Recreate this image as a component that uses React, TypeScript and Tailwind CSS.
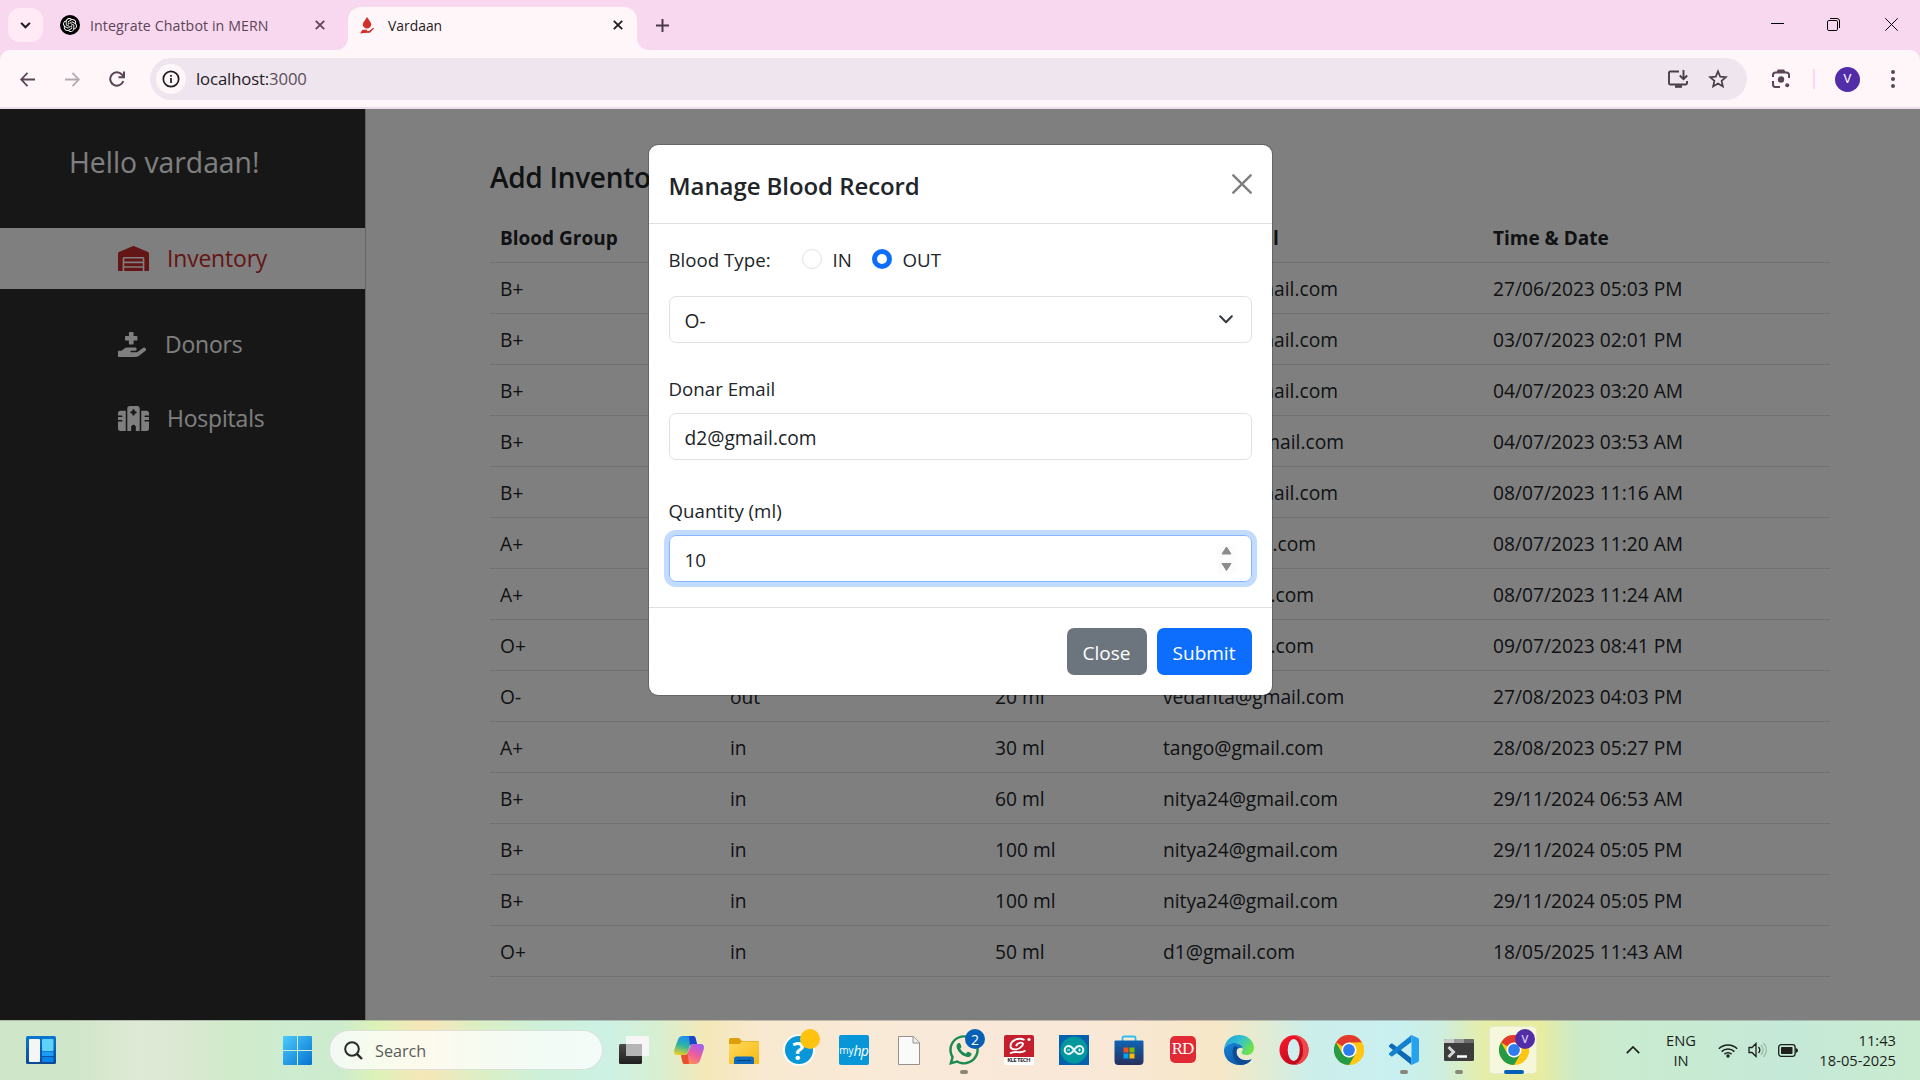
import React from "react";
import { FaWarehouse, FaHandHoldingMedical, FaWhatsapp } from "react-icons/fa";
import { FaHospital } from "react-icons/fa6";
import { SiOpenai } from "react-icons/si";

type Row = [string, string, string, string, string, string?];

const rows: Row[] = [
  ["B+", "", "", "nitya24@gmail.com", "27/06/2023 05:03 PM", "w-[175px]"],
  ["B+", "", "", "nitya24@gmail.com", "03/07/2023 02:01 PM", "w-[175px]"],
  ["B+", "", "", "nitya24@gmail.com", "04/07/2023 03:20 AM", "w-[175px]"],
  ["B+", "", "", "vardaan@gmail.com", "04/07/2023 03:53 AM", "w-[181px]"],
  ["B+", "", "", "nitya24@gmail.com", "08/07/2023 11:16 AM", "w-[175px]"],
  ["A+", "", "", "nitya@gmail.com", "08/07/2023 11:20 AM", "w-[153px]"],
  ["A+", "", "", "donor@gmail.com", "08/07/2023 11:24 AM", "w-[151px]"],
  ["O+", "", "", "donor@gmail.com", "09/07/2023 08:41 PM", "w-[151px]"],
  ["O-", "out", "20 ml", "vedanta@gmail.com", "27/08/2023 04:03 PM"],
  ["A+", "in", "30 ml", "tango@gmail.com", "28/08/2023 05:27 PM"],
  ["B+", "in", "60 ml", "nitya24@gmail.com", "29/11/2024 06:53 AM"],
  ["B+", "in", "100 ml", "nitya24@gmail.com", "29/11/2024 05:05 PM"],
  ["B+", "in", "100 ml", "nitya24@gmail.com", "29/11/2024 05:05 PM"],
  ["O+", "in", "50 ml", "d1@gmail.com", "18/05/2025 11:43 AM"],
];

const CloseX = ({ className }: { className: string }) => (
  <svg viewBox="0 0 10 10" className={className} stroke="currentColor" strokeWidth="1.8" fill="none">
    <path d="M0.8 0.8 9.2 9.2M9.2 0.8 0.8 9.2" />
  </svg>
);

function TabStrip() {
  return (
    <div className="flex h-[50px] bg-[#f8d8ef] text-[14.2px]">
      <div className="ml-2 mt-2 flex h-[34px] w-[35px] items-center justify-center rounded-xl bg-[#ffeaf6]">
        <svg viewBox="0 0 12 8" className="h-[7px] w-[11px]" fill="none" stroke="#1f1a1e" strokeWidth="2.4">
          <path d="M1 1l5 5 5-5" />
        </svg>
      </div>
      <div className="ml-[17px] flex h-[50px] w-[288px] items-center">
        <span className="flex size-5 items-center justify-center rounded-full bg-black text-white">
          <SiOpenai className="size-[14px]" />
        </span>
        <span className="ml-[10px] w-[214px] whitespace-nowrap pt-[2px] tracking-[0.09px] text-[#5c4458]">Integrate Chatbot in MERN</span>
        <CloseX className="ml-[11px] size-[10px] text-[#5c4458]" />
      </div>
      <div className="relative mt-[7px] flex h-[43px] w-[289px] items-center rounded-t-[13px] bg-[#fff6fa] pb-[7px]">
        <svg viewBox="0 0 12 12" className="absolute -left-3 bottom-0 size-3" fill="#fff6fa">
          <path d="M12 0v12H0A12 12 0 0 0 12 0z" />
        </svg>
        <svg viewBox="0 0 12 12" className="absolute -right-3 bottom-0 size-3" fill="#fff6fa">
          <path d="M0 0v12h12A12 12 0 0 1 0 0z" />
        </svg>
        <svg viewBox="0 0 14 17" className="ml-[12px] h-[17px] w-[14px]" fill="#d32f2b">
          <path d="M7 0c1.800 3 4.200 5 4.200 7.400a4.200 4.200 0 0 1-8.400 0C2.800 5 5.600 3 7 0z" />
          <path d="M0 16.500 2.500 12.800h4.800l-.4 1.200h2.300l4-3.200.8.700L10 15.800 4 16z" />
        </svg>
        <span className="ml-[14px] w-[219px] pt-[2px] text-[13.9px] text-[#1f1a1e]">Vardaan</span>
        <CloseX className="ml-[6px] size-[10px] text-[#1f1a1e]" />
      </div>
      <svg viewBox="0 0 12 12" className="ml-[19px] mt-[19px] size-[13px]" stroke="#4a3847" strokeWidth="1.800">
        <path d="M6 0v12M0 6h12" />
      </svg>
      <div className="ml-auto flex text-black">
        <svg viewBox="0 0 13 13" className="mr-[43px] mt-[17px] size-[13px]" stroke="currentColor" strokeWidth="1">
          <path d="M0 6.500h13" />
        </svg>
        <svg viewBox="0 0 13 13" className="mr-[45px] mt-[18px] size-[13px]" stroke="currentColor" fill="none" strokeWidth="1">
          <rect x=".5" y="2.500" width="10" height="10" rx="1.300" />
          <path d="M3 .5h7a2.500 2.500 0 0 1 2.500 2.500v7" />
        </svg>
        <svg viewBox="0 0 13 13" className="mr-[22px] mt-[18px] size-[13px]" stroke="currentColor" strokeWidth="1">
          <path d="M.3.3l12.400 12.400M12.700.3.3 12.700" />
        </svg>
      </div>
    </div>
  );
}

function Toolbar() {
  return (
    <div className="bg-[#f8d8ef]">
      <div className="flex h-[59px] items-start rounded-t-[10px] border-b-2 border-[#ecdde8] bg-[#fff6fa] pt-2 text-[#5a4456]">
        <div className="flex h-[42px] w-[150px] items-center">
          <svg viewBox="0 0 16 16" className="ml-5 size-[15px]" fill="none" stroke="currentColor" strokeWidth="1.900">
            <path d="M16 8H1.500M8 1 1.300 8 8 15" />
          </svg>
          <svg viewBox="0 0 16 16" className="ml-[30px] size-[15px] text-[#b3a9b1]" fill="none" stroke="currentColor" strokeWidth="1.900">
            <path d="M0 8h14.500M8 1l6.700 7L8 15" />
          </svg>
          <svg viewBox="0 0 16 16" className="ml-[29px] size-4" fill="none" stroke="currentColor" strokeWidth="2">
            <path d="M14.300 10A6.700 6.700 0 1 1 13 3.600L14.500 5.500M15 .5v5.700H9.500" />
          </svg>
        </div>
        <div className="flex h-[42px] w-[1597px] items-center rounded-full bg-[#efe5ee] pl-[6px]">
          <span className="flex size-[30px] items-center justify-center rounded-full bg-[#fff6fa]">
            <svg viewBox="0 0 18 18" className="size-[18px] text-[#1f1a1e]" fill="none" stroke="currentColor" strokeWidth="1.700">
              <circle cx="9" cy="9" r="7.700" />
              <path d="M9 8v5M9 5v1.700" />
            </svg>
          </span>
          <span className="ml-[10px] text-[16.700px] tracking-[-0.12px] text-[#1f1a1e]">
            localhost:<span className="text-[#5a4f59]">3000</span>
          </span>
          <svg viewBox="0 0 20 18" className="ml-auto h-[18px] w-5 text-[#474047]" fill="none" stroke="currentColor" strokeWidth="1.900">
            <path d="M11 1.500H2.500A1.300 1.300 0 0 0 1 2.800v10.400a1.300 1.300 0 0 0 1.300 1.300h15.400A1.300 1.300 0 0 0 19 13.200V11M15.500 0v9M11.800 5.500l3.700 3.700L19.200 5.500" />
            <path d="M7 16.500h7" strokeWidth="2.600" />
          </svg>
          <svg viewBox="0 0 20 20" className="ml-5 mr-[19px] size-5 text-[#474047]" fill="none" stroke="currentColor" strokeWidth="1.700">
            <path d="M10 2.300l2.200 5.300 5.700.5-4.300 3.800 1.300 5.600-4.900-3-4.900 3 1.300-5.600L2.100 8.100l5.700-.5z" />
          </svg>
        </div>
        <div className="flex h-[42px] flex-1 items-center">
          <svg viewBox="0 0 20 20" className="ml-[24px] size-5" fill="none" stroke="currentColor" strokeWidth="2">
            <path d="M2 8V6a2.500 2.500 0 0 1 2.500-2.500h11A2.500 2.500 0 0 1 18 6v3M2 12v3.500A2.500 2.500 0 0 0 4.500 18H9M6.500 3 7.500 1.500h5l1 1.500" />
            <circle cx="10" cy="10.500" r="3.200" fill="currentColor" stroke="none" />
            <circle cx="16.200" cy="16.200" r="2" fill="currentColor" stroke="none" />
          </svg>
          <span className="ml-[22px] h-5 w-[2px] bg-[#ffd6f2]" />
          <span className="ml-5 flex size-[25px] items-center justify-center rounded-full bg-[#512da8] font-['Roboto',sans-serif] text-[13px] text-white">V</span>
          <svg viewBox="0 0 4 18" className="ml-[31px] h-[18px] w-1" fill="currentColor">
            <circle cx="2" cy="2" r="2" />
            <circle cx="2" cy="9" r="2" />
            <circle cx="2" cy="16" r="2" />
          </svg>
        </div>
      </div>
    </div>
  );
}

function Sidebar() {
  return (
    <aside className="w-[366px] shrink-0 border-r border-[#c8c8c8] bg-[#2e2e2e] text-white">
      <h4 className="pl-[69px] pt-[33px] text-[28.300px] leading-[40px]">Hello vardaan!</h4>
      <nav className="mt-[46px] text-[22.900px] leading-[30px] tracking-[-0.15px]">
        <div className="flex h-[61px] items-center bg-white pl-[118px] text-[#c92a2a]">
          <FaWarehouse className="h-[25px] w-[31px]" />
          <span className="ml-[18px] pt-px">Inventory</span>
        </div>
        <div className="mt-[25px] flex h-[61px] items-center pl-[118px]">
          <FaHandHoldingMedical className="h-[25px] w-[28px]" />
          <span className="ml-[19px] pt-px">Donors</span>
        </div>
        <div className="mt-[13px] flex h-[61px] items-center pl-[118px]">
          <FaHospital className="h-[25px] w-[31px]" />
          <span className="ml-[18px] pt-px">Hospitals</span>
        </div>
      </nav>
    </aside>
  );
}

function Inventory() {
  const cols = "grid grid-cols-[230px_265px_168px_330px_1fr] pl-[10px] pt-[11px] h-[51px] leading-[30px] border-b border-[#dee2e6] whitespace-nowrap";
  return (
    <main className="w-[1464px] pl-[124px] pt-[47px] text-[19.200px] text-[#212529]">
      <h4 className="h-[56px] text-[28px] font-semibold leading-[42px] tracking-[-0.3px]">Add Inventory</h4>
      <div className={cols + " text-[19px] font-bold"}>
        <span>Blood Group</span>
        <span />
        <span />
        <span>Donar Email</span>
        <span>Time &amp; Date</span>
      </div>
      {rows.map((r, i) => (
        <div key={i} className={cols}>
          <span>{r[0]}</span>
          <span>{r[1]}</span>
          <span>{r[2]}</span>
          <span className={r[5] ? r[5] + " flex justify-end" : ""}>{r[3]}</span>
          <span>{r[4]}</span>
        </div>
      ))}
    </main>
  );
}

function Modal() {
  return (
    <div className="h-[552px] w-[625px] rounded-[10px] border border-black/20 bg-white bg-clip-padding text-[#212529]">
      <div className="flex h-[79px] items-center justify-between border-b border-[#dee2e6] px-5">
        <h5 className="pt-[3px] text-[24px] font-semibold tracking-[-0.07px]">Manage Blood Record</h5>
        <svg viewBox="0 0 20 20" className="size-5" stroke="#7f7f7f" strokeWidth="2.400" strokeLinecap="round">
          <path d="M1.300 1.300l17.400 17.400M18.700 1.300 1.300 18.700" />
        </svg>
      </div>
      <div className="flex h-[384px] flex-col border-b border-[#dee2e6] px-5 pt-5">
        <div className="flex h-[30px] items-center">
          <span className="w-[133px] pt-[3px]">Blood Type:</span>
          <span className="size-5 rounded-full border border-[#dee2e6]" />
          <span className="ml-[11px] w-[39px] pt-[3px]">IN</span>
          <span className="flex size-5 items-center justify-center rounded-full bg-[#0d6efd]">
            <span className="size-[10px] rounded-full bg-white" />
          </span>
          <span className="ml-[11px] pt-[3px]">OUT</span>
        </div>
        <div className="mt-[22px] flex h-[47px] items-center justify-between rounded-[7px] border border-[#dee2e6] pl-[15px] pr-[18px]">
          <span className="pt-[3px] text-[19.200px]">O-</span>
          <svg viewBox="0 0 14 9" className="h-[9px] w-[14px]" fill="none" stroke="#343a40" strokeWidth="2" strokeLinecap="round" strokeLinejoin="round">
            <path d="M1.200 1.200 7 7.200l5.800-6" />
          </svg>
        </div>
        <label className="mt-[30px] h-[40px] leading-[32px]">Donar Email</label>
        <div className="flex h-[47px] items-center rounded-[7px] border border-[#dee2e6] pl-[15px]">
          <span className="pt-[3px] text-[19.200px]">d2@gmail.com</span>
        </div>
        <label className="mt-[34px] h-[41px] leading-[33px]">Quantity (ml)</label>
        <div className="flex h-[47px] items-center justify-between rounded-[7px] border border-[#86b7fe] pl-[15px] pr-[15px] ring-[5px] ring-[#c2dbfe]">
          <span className="pt-[3px]">10</span>
          <span className="flex h-[30px] w-[19px] items-center justify-center bg-[#fcfcfc]">
            <svg viewBox="0 0 11 25" className="h-[25px] w-[11px]" fill="#8b8b8b" stroke="#8b8b8b" strokeLinejoin="round">
              <path d="M5.500 1 10 8H1zM5.500 24.500 10 17.500H1z" />
            </svg>
          </span>
        </div>
      </div>
      <div className="flex justify-end gap-[10px] px-5 pt-5 text-white">
        <span className="flex h-[47px] w-20 items-center justify-center rounded-[7px] bg-[#6c757d] pt-[3px] text-[19px]">Close</span>
        <span className="flex h-[47px] w-[95px] items-center justify-center rounded-[7px] bg-[#0d6efd] pt-[3px] text-[19px]">Submit</span>
      </div>
    </div>
  );
}

const Chrome = () => (
  <svg viewBox="0 0 30 30" className="size-[30px]">
    <circle cx="15" cy="15" r="15" fill="#ffc614" />
    <path d="M15 15 2 7.500A15 15 0 0 1 28 7.500L15 8z" fill="#e23b2e" />
    <path d="M28 7.500H15l6.500 11.300L15 30A15 15 0 0 0 28 7.500z" fill="#ffc614" />
    <path d="M2 7.500A15 15 0 0 0 15 30l6.500-11.300-6.500 3.800-6.500-3.800z" fill="#259b45" />
    <circle cx="15" cy="15" r="7.500" fill="#fff" />
    <circle cx="15" cy="15" r="5.900" fill="#2f7cee" />
  </svg>
);

const Slot = ({ children, dot }: { children: React.ReactNode; dot?: boolean }) => (
  <div className="relative flex h-[60px] w-[55px] items-center justify-center">
    {children}
    {dot && <span className="absolute bottom-[6px] h-1 w-2 rounded-full bg-[#8b8578]" />}
  </div>
);

function TaskbarIcons() {
  return (
    <div className="ml-[3px] flex">
      <Slot>
        <svg viewBox="0 0 30 28" className="h-7 w-[30px]">
          <defs>
            <linearGradient id="tv" x1="0" y1="0" x2="0" y2="1"><stop stopColor="#4a4a4a" /><stop offset="1" stopColor="#1f1f1f" /></linearGradient>
          </defs>
          <rect y="8" width="23" height="20" rx="1.500" fill="url(#tv)" />
          <rect x="7" width="23" height="20" rx="1.500" fill="#f6f6f6" />
          <path d="M7 8h16v12H8.500A1.500 1.500 0 0 1 7 18.500z" fill="#b5b5b5" />
        </svg>
      </Slot>
      <Slot>
        <svg viewBox="0 0 30 28" className="h-7 w-[30px]">
          <defs>
            <linearGradient id="c1" x1=".5" y1="0" x2=".2" y2="1"><stop stopColor="#1b8df0" /><stop offset=".5" stopColor="#2fb5a0" /><stop offset="1" stopColor="#f0d020" /></linearGradient>
            <linearGradient id="c2" x1=".8" y1="0" x2=".2" y2="1"><stop stopColor="#a35cf5" /><stop offset=".5" stopColor="#ee5f9a" /><stop offset="1" stopColor="#fb9a4a" /></linearGradient>
          </defs>
          <path d="M9 0h10c2 0 2.500 1.500 3 4l1 4h-4c-2 0-3 1-3.500 3l-2 6c-.5 1.500-1.500 2-3 2H3c-3 0-3.500-3-2.500-6L4 3.500C5 1 6.500 0 9 0z" fill="url(#c1)" />
          <path d="M15 0h4c2 0 2.500 1.500 3 4l1 4h-4c-1.500 0-2.500.5-3 2z" fill="#1b45c4" />
          <path d="M21 28H11c-2 0-2.500-1.500-3-4l-1-5h3.500c2 0 3-1 3.500-3l2.500-6c.5-1.500 1.500-2 3-2H27c3 0 3.500 3 2.500 6L26 24.500c-1 2.500-2.500 3.500-5 3.500z" fill="url(#c2)" />
          <path d="M15 28h-4c-2 0-2.500-1.500-3-4l-1-5h3.500c1.500 0 2.500-.5 3-1.500z" fill="#e9502f" />
        </svg>
      </Slot>
      <Slot>
        <svg viewBox="0 0 30 26" className="mb-[-1px] h-[26px] w-[30px]">
          <defs>
            <linearGradient id="fo" x1="0" y1="0" x2="1" y2="1"><stop stopColor="#ffd95c" /><stop offset="1" stopColor="#f7b913" /></linearGradient>
          </defs>
          <path d="M0 1.500A1.500 1.500 0 0 1 1.500 0H10l3 3h15.500A1.500 1.500 0 0 1 30 4.500V10H0z" fill="#dd9f0a" />
          <path d="M0 6h10.500L13 3.500h15.500A1.500 1.500 0 0 1 30 5v21H0z" fill="url(#fo)" />
          <path d="M5 26v-5a2.500 2.500 0 0 1 2.500-2.500h15A2.500 2.500 0 0 1 25 21v5z" fill="#0f6cbd" />
          <path d="M8 22.500h14" stroke="#0a3f85" />
        </svg>
      </Slot>
      <Slot>
        <span className="flex size-7 items-center justify-center rounded-full bg-[#0797d8] text-[25px] font-bold leading-none text-white ring-2 ring-white/80">?</span>
        <span className="absolute left-[29px] top-[9px] size-5 rounded-full bg-[#ffc20e]" />
      </Slot>
      <Slot>
        <span className="flex size-[30px] items-center justify-center rounded-[2px] bg-[#0797d8] text-white">
          <span className="text-[10px]">my</span>
          <span className="text-[14px] italic tracking-[-1px]">hp</span>
        </span>
      </Slot>
      <Slot>
        <svg viewBox="0 0 22 29" className="h-[29px] w-[22px]" fill="#fafafa" stroke="#97918b">
          <path d="M.5.5h15l6 6v22H.5z" />
          <path d="M15 .5V7h6.500" fill="#eee" />
        </svg>
      </Slot>
      <Slot dot>
        <FaWhatsapp className="size-[34px] text-[#1c8a55]" />
        <span className="absolute left-[29px] top-[9px] flex size-5 items-center justify-center rounded-full bg-[#0560b6] text-[14px] text-white">2</span>
      </Slot>
      <Slot>
        <span className="flex size-[30px] flex-col items-center rounded-[2px] bg-white">
          <svg viewBox="0 0 30 22" className="h-[22px] w-[30px]">
            <path d="M0 2a2 2 0 0 1 2-2h26a2 2 0 0 1 2 2v20H0z" fill="#c51f2d" />
            <path d="M20.500 5C14 1.500 6.500 6 6.500 11c0 4.500 8 4.500 11.500 0 3.500-4-3.500-5-6 0M6 18.500c6-4 9 1.500 15.500-3" stroke="#fff" strokeWidth="1.900" fill="none" />
            <circle cx="25" cy="4.500" r="1.600" fill="#fff" />
          </svg>
          <span className="whitespace-nowrap text-[6px] font-bold leading-[7px] tracking-[-0.6px] text-[#333]">KLE TECH</span>
        </span>
      </Slot>
      <Slot>
        <span className="flex size-[30px] items-center justify-center bg-[#0560b0]">
          <svg viewBox="0 0 28 28" className="size-7">
            <circle cx="14" cy="14" r="13.500" fill="#00979d" />
            <path d="M14 14c-2-3-3.500-4-5.300-4a4 4 0 0 0 0 8c1.800 0 3.300-1 5.300-4s3.500-4 5.300-4a4 4 0 0 1 0 8c-1.800 0-3.300-1-5.300-4z" stroke="#e8f4f4" strokeWidth="2" fill="none" />
            <path d="M7 14h3M18 14h3M19.500 12.500v3" stroke="#e8f4f4" strokeWidth="1" />
          </svg>
        </span>
      </Slot>
      <Slot>
        <svg viewBox="0 0 30 30" className="size-[30px]">
          <defs><linearGradient id="st" x1="0" y1="0" x2="0" y2="1"><stop stopColor="#0f64b4" /><stop offset="1" stopColor="#27305e" /></linearGradient></defs>
          <path d="M8.500 7V3a1.500 1.500 0 0 1 1.500-1.500h10A1.500 1.500 0 0 1 21.500 3v4" fill="none" stroke="#2bbdf3" strokeWidth="1.800" />
          <path d="M.5 6.500A1 1 0 0 1 1.500 5.500h27a1 1 0 0 1 1 1V26a4 4 0 0 1-4 4h-21a4 4 0 0 1-4-4z" fill="url(#st)" />
          <path d="M9.500 12.500h5v5h-5z" fill="#f25022" />
          <path d="M15.500 12.500h5v5h-5z" fill="#7fba00" />
          <path d="M9.500 18.500h5v5h-5z" fill="#00a4ef" />
          <path d="M15.500 18.500h5v5h-5z" fill="#ffb900" />
        </svg>
      </Slot>
      <Slot>
        <span className="mb-px mr-[2px] flex h-[27px] w-[26px] items-center justify-center rounded-[5px] bg-[#e22a35] pb-[2px] font-['Liberation_Serif',serif] text-[17px] tracking-[-1px] text-white">RD</span>
      </Slot>
      <Slot>
        <svg viewBox="0 0 30 30" className="size-[30px]">
          <defs>
            <linearGradient id="e1" x1="0" y1="0" x2="1" y2=".5"><stop stopColor="#1b9de0" /><stop offset=".55" stopColor="#33c1cf" /><stop offset="1" stopColor="#6be34c" /></linearGradient>
            <linearGradient id="e2" x1="0" y1="0" x2=".6" y2="1"><stop stopColor="#1686d9" /><stop offset="1" stopColor="#0f55a8" /></linearGradient>
          </defs>
          <path d="M0 14C1 6 7 0 15 0c9 0 15 6.500 15 12.500 0 5-3.500 7.500-7.500 7.500-3 0-5-1.200-5-2.200 0-.8 1.300-1.300 1.300-3.800 0-3-3.500-6-9-6C5 8 1.500 10.500 0 14z" fill="url(#e1)" />
          <path d="M0 14.500C1.500 10.500 5 8 10 8c5 0 8.500 2.500 8.800 5.500-1.500-1.500-6-1-6.300 3C12 22 17 25.500 22 25.500c2 0 4-.7 5.500-1.300C25 28 20.500 30 15.500 30 6 30-.5 23 0 14.500z" fill="url(#e2)" />
          <path d="M10.500 11C7 15 8 26 16.500 29.800c5 0 9-2 11-5.600-6 2.500-14 .3-15-6.200-.3-3 .5-4.500 2-5.500z" fill="#0c4a94" />
        </svg>
      </Slot>
      <Slot>
        <svg viewBox="0 0 30 30" className="size-[30px]">
          <defs><linearGradient id="op" x1="0" y1="0" x2="1" y2="1"><stop stopColor="#ff1b2d" /><stop offset="1" stopColor="#a70014" /></linearGradient></defs>
          <ellipse cx="15" cy="15" rx="14.500" ry="14.700" fill="url(#op)" />
          <path d="M15 .3A14.500 14.700 0 0 1 15 29.700 14 14 0 0 0 24 15 14 14 0 0 0 15 .3z" fill="#f0474c" />
          <ellipse cx="14.700" cy="15" rx="6" ry="11" fill="#cfeeee" />
        </svg>
      </Slot>
      <Slot><Chrome /></Slot>
      <Slot dot>
        <svg viewBox="0 0 30 30" className="size-[30px]">
          <path d="M0 10.500 2 8.700c.5-.4 1-.4 1.500 0L22.500 23v7L.3 12c-.5-.5-.6-1-.3-1.500z" fill="#0a6ab5" />
          <path d="M0 19.500l2 1.800c.5.4 1 .4 1.500 0L22.500 7V0L.3 18c-.5.500-.6 1-.3 1.500z" fill="#1482cc" />
          <path d="M22.500 0 29 3c.6.300 1 .8 1 1.500v21c0 .7-.4 1.200-1 1.500l-6.500 3c-.8.200-1.300 0-1.700-.5 1 .8 1.700.2 1.700-.7V1.200c0-.9-.7-1.500-1.700-.7.500-.5 1-.7 1.700-.5z" fill="#25a3f0" />
        </svg>
      </Slot>
      <Slot dot>
        <svg viewBox="0 0 30 22" className="h-[22px] w-[30px]">
          <rect width="30" height="22" rx="1.500" fill="#3c3c3c" />
          <path d="M0 4V1.500A1.500 1.500 0 0 1 1.500 0H10v4z" fill="#c9c9c9" />
          <path d="M10 0h10v4H10z" fill="#999" />
          <path d="M20 0h8.500A1.500 1.500 0 0 1 30 1.500V4H20z" fill="#6b6b6b" />
          <path d="M4.500 8l5 5-5 5" stroke="#d4d4d4" strokeWidth="3" fill="none" />
          <path d="M13 17.500h10" stroke="#fff" strokeWidth="2.500" />
        </svg>
      </Slot>
      <Slot>
        <span className="absolute left-[3px] top-[6px] h-12 w-12 rounded-[5px] border border-black/5 bg-white/60" />
        <span className="relative"><Chrome /></span>
        <span className="absolute left-[29px] top-[9px] flex size-5 items-center justify-center rounded-full bg-[#512da8] text-[11px] font-semibold text-[#d5c8f0]">V</span>
        <span className="absolute bottom-[6px] h-1 w-5 rounded-full bg-[#0560b6]" />
      </Slot>
    </div>
  );
}

function Taskbar() {
  return (
    <div className="flex h-[60px] items-center bg-[linear-gradient(90deg,#cfe6c8_0px,#cfe6c8_70px,#dfe9d6_140px,#dae8d2_190px,#d0ebc9_230px,#cdecd0_290px,#cdecce_340px,#dcf2b8_375px,#f6e6b8_425px,#dcefc4_480px,#cdf0d9_540px,#cdf1e4_610px,#d8efd0_660px,#f4e8b8_705px,#f8e9d0_760px,#f9e9d8_900px,#f9e8d8_1080px,#f6e7c8_1220px,#e6ebd0_1255px,#cceeea_1310px,#c9f0f0_1400px,#cdeee0_1440px,#e4edac_1480px,#e8eca0_1540px,#cdeac8_1575px,#c9ebcf_1620px,#c5e9d8_1790px,#c9ebcf_1920px)] shadow-[inset_0_1px_0_rgba(120,120,120,0.4)]">
      <svg viewBox="0 0 30 28" className="ml-[26px] h-7 w-[30px]">
        <defs><linearGradient id="wi" x1="0" y1="0" x2="0" y2="1"><stop stopColor="#0a78d0" /><stop offset="1" stopColor="#0c4a92" /></linearGradient></defs>
        <rect width="30" height="28" rx="1.500" fill="url(#wi)" />
        <rect x="3" y="3" width="11" height="23" rx="1" fill="#f5f5f5" />
        <rect x="16" y="3" width="11.500" height="12" rx="1" fill="#5fd2fc" />
        <rect x="16" y="15.500" width="11.500" height="4.500" fill="#1b9df5" />
        <rect x="16" y="21" width="11.500" height="5" rx="1" fill="#0a84ea" />
      </svg>
      <svg viewBox="0 0 29 29" className="ml-[227px] size-[29px]">
        <defs><linearGradient id="wn" x1="0" y1="0" x2="1" y2="1"><stop stopColor="#4ccbfb" /><stop offset="1" stopColor="#0573d2" /></linearGradient></defs>
        <path d="M1 0h13v14H0V1a1 1 0 0 1 1-1zM15 0h13a1 1 0 0 1 1 1v13H15zM0 15h14v14H1a1 1 0 0 1-1-1zM15 15h14v13a1 1 0 0 1-1 1H15z" fill="url(#wn)" />
      </svg>
      <div className="ml-[17px] flex h-10 w-[274px] items-center rounded-full border border-black/10 bg-white/75 pl-[14px]">
        <svg viewBox="0 0 19 19" className="size-[19px]" fill="none" stroke="#2a2a2a" strokeWidth="2">
          <circle cx="8" cy="8" r="6.800" />
          <path d="M12.800 12.800 18 18" strokeWidth="2.400" />
        </svg>
        <span className="ml-[12px] pt-[2px] text-[16.200px] text-[#5b5b5b]">Search</span>
      </div>
      <TaskbarIcons />
      <div className="flex flex-1 items-center text-[14.700px] leading-5 text-[#1c1f1c]">
        <svg viewBox="0 0 14 8" className="ml-[85px] h-2 w-[14px]" fill="none" stroke="currentColor" strokeWidth="1.700">
          <path d="M.8 7.200 7 1l6.200 6.200" />
        </svg>
        <div className="ml-[14px] w-[54px] text-center">ENG<br />IN</div>
        <svg viewBox="0 0 20 15" className="ml-[10px] h-[15px] w-5" fill="none" stroke="currentColor" strokeWidth="1.500">
          <path d="M.8 5.800a13 13 0 0 1 18.400 0M3.600 8.600a9 9 0 0 1 12.800 0M6.400 11.300a5 5 0 0 1 7.200 0" />
          <circle cx="10" cy="13" r="1.700" fill="currentColor" stroke="none" />
        </svg>
        <svg viewBox="0 0 20 16" className="ml-[10px] h-4 w-5" fill="none" stroke="currentColor" strokeWidth="1.300">
          <path d="M1 5.500h3l4-4v13l-4-4H1zM10.500 5a4.500 4.500 0 0 1 0 6" />
          <path d="M13 3a7 7 0 0 1 0 10M15.500 1a10 10 0 0 1 0 14" stroke="#9dbba4" />
        </svg>
        <svg viewBox="0 0 20 13" className="ml-[10px] h-[13px] w-5" fill="none" stroke="currentColor" strokeWidth="1.300">
          <rect x=".7" y=".7" width="16.400" height="11.600" rx="2.500" />
          <rect x="3" y="3" width="11.500" height="7" rx=".8" fill="currentColor" stroke="none" />
          <path d="M18 4.500v4l1.500-1v-2z" fill="currentColor" strokeWidth=".8" />
        </svg>
        <div className="ml-auto mr-6 text-right">11:43<br />18-05-2025</div>
      </div>
    </div>
  );
}

export default function App() {
  return (
    <div className="flex h-[1080px] w-[1920px] flex-col overflow-hidden font-['Open_Sans',sans-serif]">
      <TabStrip />
      <Toolbar />
      <div className="relative flex h-[911px] overflow-hidden bg-white text-[18.700px]">
        <Sidebar />
        <Inventory />
        <div className="absolute inset-0 flex items-start justify-center bg-black/50 pt-[35px]">
          <Modal />
        </div>
      </div>
      <Taskbar />
    </div>
  );
}
